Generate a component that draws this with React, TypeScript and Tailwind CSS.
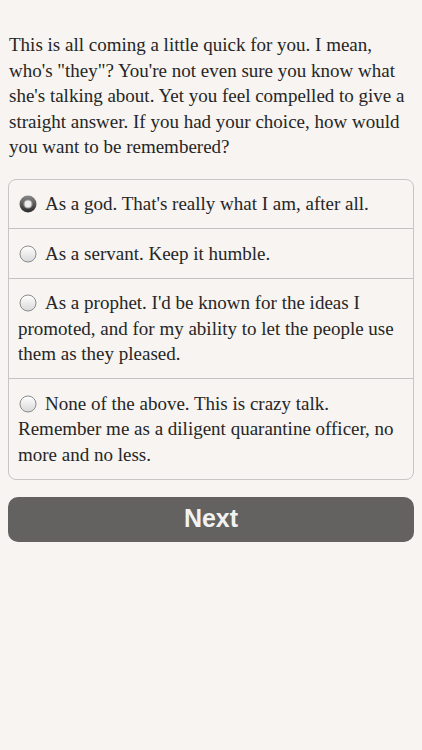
import React from "react";

const OPTIONS = [
  "As a god. That's really what I am, after all.",
  "As a servant. Keep it humble.",
  "As a prophet. I'd be known for the ideas I promoted, and for my ability to let the people use them as they pleased.",
  "None of the above. This is crazy talk. Remember me as a diligent quarantine officer, no more and no less.",
];

function Radio({ checked }: { checked: boolean }) {
  return (
    <svg width="18" height="18" viewBox="0 0 18 18" className="inline-block align-[-3px] ml-[1px] mr-[8px]">
      <defs>
        <linearGradient id="on" x1="0" y1="0" x2="0" y2="1">
          <stop offset="0" stopColor="#8a8a8a" />
          <stop offset="1" stopColor="#2a2a2a" />
        </linearGradient>
        <linearGradient id="off" x1="0" y1="0" x2="0" y2="1">
          <stop offset="0" stopColor="#ffffff" />
          <stop offset="1" stopColor="#d8d8d8" />
        </linearGradient>
      </defs>
      {checked ? (
        <>
          <circle cx="9" cy="9" r="8.5" fill="url(#on)" />
          <circle cx="9" cy="9" r="4.6" fill="#9a9a9a" />
          <circle cx="9" cy="9" r="3.4" fill="#ececec" />
        </>
      ) : (
        <circle cx="9" cy="9" r="8" fill="url(#off)" stroke="#8c8c8c" strokeWidth="1" />
      )}
    </svg>
  );
}

export default function App() {
  return (
    <div className="min-h-[750px] bg-[#f7f4f1] px-2 pt-[32px] font-['Liberation_Serif',serif] text-[19px] leading-[25.5px] text-[#262626]">
      {/* Prompt */}
      <p className="px-[1px]">
        This is all coming a little quick for you. I mean, who's "they"? You're not even sure you know what
        she's talking about. Yet you feel compelled to give a straight answer. If you had your choice, how would
        you want to be remembered?
      </p>

      {/* Choices */}
      <div className="mt-[19px] rounded-lg border border-[#c6c6c6] overflow-hidden">
        {OPTIONS.map((opt, i) => (
          <div
            key={opt}
            className={`px-[9px] py-[11.5px] ${i > 0 ? "border-t border-[#c2c2c2]" : ""}`}
          >
            <Radio checked={i === 0} />
            {opt}
          </div>
        ))}
      </div>

      {/* Next */}
      <button className="mt-[17px] w-full h-[45px] rounded-[10px] bg-[#636260] text-[#f2f2f2] font-['Liberation_Sans',sans-serif] font-bold text-[25px] flex items-center justify-center">
        Next
      </button>
    </div>
  );
}
